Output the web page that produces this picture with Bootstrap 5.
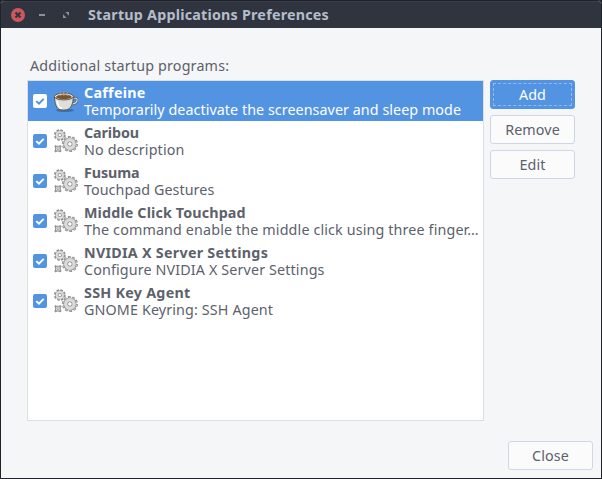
<!DOCTYPE html>
<html lang="en">
<head>
<meta charset="utf-8">
<meta name="viewport" content="width=device-width, initial-scale=1">
<title>Startup Applications Preferences</title>
<link rel="stylesheet" href="https://cdn.jsdelivr.net/npm/bootstrap@5.3.0/dist/css/bootstrap.min.css">
<style>
body{font-family:"Noto Sans","Open Sans",sans-serif;font-size:14.3px;color:#5c616c;background:#21242d;line-height:17px;white-space:nowrap}
.window{height:479px;background:#f5f6f7;border:1px solid #1f212b;border-radius:4px 4px 0 0}
.titlebar{height:27px;padding-bottom:1px;background:#2f343f;border-top:1px solid #3a3f4b;color:#b5bdca;padding-left:10px;border-radius:3px 3px 0 0;letter-spacing:.22px}
.titlebar svg{width:66px;height:16px;margin-right:11px}
.caption{margin:29px 0 6px 3px;height:17px;letter-spacing:.18px}
.main{padding-left:26px}
.programs{width:457px;height:341px;background:#fff;border:1px solid #dcdfe3;border-radius:0}
.program{height:40px;padding:3px 0 3px 5px;border:0;color:#5c616c;background:#fff}
.program.active{background:#5294e2;color:#fff}
.program strong{font-weight:700;display:block}
.program span{display:block}
.tight{letter-spacing:-.1px}
.ls-s{letter-spacing:.06px}
.ls-m{letter-spacing:.14px}
.ls-l{letter-spacing:.27px}
.tick{width:14px;height:14px;margin-right:6px}
.pic{width:25px;height:24px;margin-right:6px}
.actions{gap:6px;margin-left:6px}
.dlg{width:85px;height:29px;padding:0;font-size:14.3px;line-height:17px;letter-spacing:.1px;border-radius:3px;border:1px solid #cfd6e6;background:#fbfbfc;color:#5c616c}
.dlg.primary{background:#5294e2;border-color:#5294e2;color:#fff;outline:1px dashed #8fbbee;outline-offset:-4px}
.footer-row{margin-top:20px;padding-right:8px}
</style>
<script src="https://cdn.jsdelivr.net/npm/bootstrap@5.3.0/dist/js/bootstrap.bundle.min.js"></script>
</head>
<body class="m-0 overflow-hidden">
<svg class="d-none">
  <symbol id="tick-on" viewBox="0 0 14 14"><rect width="14" height="14" rx="2" fill="#5294e2"/><path d="M3.3 7.1 6 9.7 10.7 4.9" fill="none" stroke="#fff" stroke-width="2"/></symbol>
  <symbol id="tick-sel" viewBox="0 0 14 14"><rect width="14" height="14" rx="2" fill="#fff"/><path d="M3.3 7.1 6 9.7 10.7 4.9" fill="none" stroke="#5294e2" stroke-width="2"/></symbol>
  <symbol id="gears" viewBox="0 0 25 24">
    <g fill="none">
      <circle cx="6.8" cy="6" r="4.7" stroke="#929292" stroke-width="2.4" stroke-dasharray="2.3 1.391"/>
      <circle cx="6.8" cy="6" r="2.9" stroke="#929292" stroke-width="3.4"/>
      <circle cx="6.8" cy="6" r="3.1" stroke="#dcdcdc" stroke-width="2"/>
      <circle cx="16.9" cy="15" r="6.7" stroke="#8b8b8b" stroke-width="2.6" stroke-dasharray="2.6 1.61"/>
      <circle cx="16.9" cy="15" r="6.3" stroke="#d8d8d8" stroke-width="2" stroke-dasharray="1.2 2.758" stroke-dashoffset="-.6"/>
      <circle cx="16.9" cy="15" r="4.2" stroke="#8f8f8f" stroke-width="4.8"/>
      <circle cx="16.9" cy="15" r="4.2" stroke="#dadada" stroke-width="3.4"/>
      <path d="m1.9 16.7 6 6m0-6-6 6" stroke="#8b8b8b" stroke-width="2.2"/>
      <rect x="2.5" y="17.3" width="4.8" height="4.8" fill="#d4d4d4" stroke="#959595"/><circle cx="4.9" cy="19.7" r=".9" fill="#fff" stroke="#999" stroke-width=".7"/>
    </g>
  </symbol>
  <symbol id="cup" viewBox="0 0 25 24"><g transform="translate(0 1)">
    <ellipse cx="12" cy="20.3" rx="9" ry="1.8" fill="#355f91" opacity=".7"/>
    <path d="M19 9.6c3.2-2.7 5.5-1.4 5.1.8-.3 2.2-2.5 3.5-5.9 4" fill="none" stroke="#555" stroke-width="2.4"/>
    <path d="M19 9.6c3.2-2.7 5.5-1.4 5.1.8-.3 2.2-2.5 3.5-5.9 4" fill="none" stroke="#e3e3df" stroke-width="1.1"/>
    <path d="M1.5 6.5c0 7 2.2 12.7 6 13.3q3 .5 6.2 0c4.3-.8 6.6-6.3 6.6-13.3z" fill="#dededb" stroke="#555753"/>
    <path d="M4 11c1 5 3 7 5 7.3" fill="none" stroke="#fff" stroke-width="1.6"/>
    <ellipse cx="10.9" cy="6.5" rx="9.4" ry="3.4" fill="#eeeeec" stroke="#55534d"/>
    <ellipse cx="10.9" cy="6.9" rx="7.8" ry="2.4" fill="#795528"/>
    <path d="M7.5 6q-1.3-2 0-4M11 6q-1.3-2 0-4.7M14.5 6q-1.3-2 0-4" fill="none" stroke="#bb9b7b"/>
  </g></symbol>
</svg>
<div class="window d-flex flex-column">
  <header class="titlebar d-flex align-items-center fw-bold">
    <svg viewBox="0 0 66 16"><circle cx="7" cy="8" r="7" fill="#cc575d"/><path d="m4.5 5.5 5 5m0-5-5 5" stroke="#2f343f" stroke-width="2"/><path d="M28 7h6v2h-6z" fill="#8b919e"/><path d="M54.3 5H58v3.7zM52 7.3V11h3.7z" fill="#8b919e"/></svg>
    <span>Startup Applications Preferences</span>
  </header>
  <main class="main">
    <div class="caption">Additional startup programs:</div>
    <div class="d-flex">
      <div class="programs list-group">
        <div class="program active list-group-item d-flex align-items-center m-0"><svg class="tick"><use href="#tick-sel"/></svg><svg class="pic"><use href="#cup"/></svg><div><strong class="ls-l">Caffeine</strong><span class="ls-s">Temporarily deactivate the screensaver and sleep mode</span></div></div>
        <div class="program list-group-item d-flex align-items-center"><svg class="tick"><use href="#tick-on"/></svg><svg class="pic"><use href="#gears"/></svg><div><strong class="tight">Caribou</strong><span class="ls-m">No description</span></div></div>
        <div class="program list-group-item d-flex align-items-center"><svg class="tick"><use href="#tick-on"/></svg><svg class="pic"><use href="#gears"/></svg><div><strong class="tight">Fusuma</strong><span class="ls-s">Touchpad Gestures</span></div></div>
        <div class="program list-group-item d-flex align-items-center"><svg class="tick"><use href="#tick-on"/></svg><svg class="pic"><use href="#gears"/></svg><div><strong class="ls-m">Middle Click Touchpad</strong><span class="ls-m">The command enable the middle click using three finger…</span></div></div>
        <div class="program list-group-item d-flex align-items-center"><svg class="tick"><use href="#tick-on"/></svg><svg class="pic"><use href="#gears"/></svg><div><strong class="ls-l">NVIDIA X Server Settings</strong><span class="ls-m">Configure NVIDIA X Server Settings</span></div></div>
        <div class="program list-group-item d-flex align-items-center"><svg class="tick"><use href="#tick-on"/></svg><svg class="pic"><use href="#gears"/></svg><div><strong class="ls-l">SSH Key Agent</strong><span class="ls-m">GNOME Keyring: SSH Agent</span></div></div>
      </div>
      <div class="actions d-flex flex-column">
        <button class="btn dlg primary">Add</button><button class="btn dlg">Remove</button><button class="btn dlg">Edit</button>
      </div>
    </div>
  </main>
  <footer class="footer-row d-flex justify-content-end"><button class="btn dlg">Close</button></footer>
</div>
</body>
</html>
